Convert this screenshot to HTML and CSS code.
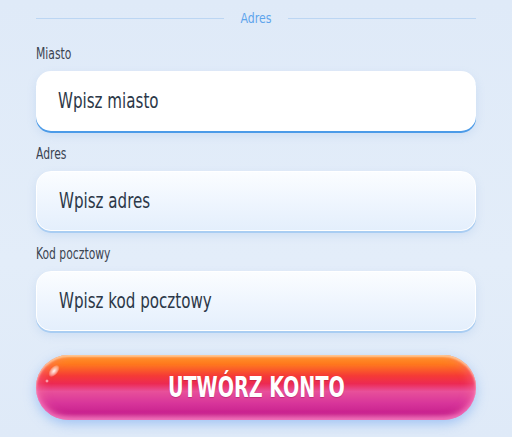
FILE: index.html
```html
<!DOCTYPE html>
<html lang="pl">
<head>
<meta charset="utf-8">
<link rel="stylesheet" href="styles.css">
</head>
<body>
<div class="form">
  <div class="divider"><span class="line"></span><span class="divider-text">Adres</span><span class="line"></span></div>
  <div class="field first">
    <label class="label"><span class="narrow">Miasto</span></label>
    <div class="input focused"><span class="narrow">Wpisz miasto</span></div>
  </div>
  <div class="field">
    <label class="label"><span class="narrow">Adres</span></label>
    <div class="input"><span class="narrow">Wpisz adres</span></div>
  </div>
  <div class="field">
    <label class="label"><span class="narrow">Kod pocztowy</span></label>
    <div class="input"><span class="narrow">Wpisz kod pocztowy</span></div>
  </div>
  <button class="submit"><span class="shine"></span><span class="shine small"></span><span class="submit-text">UTWÓRZ KONTO</span></button>
</div>
</body>
</html>
```
FILE: styles.css
```css
html, body {
  margin: 0;
  height: 100%;
}
body {
  background: linear-gradient(180deg, #dfeaf8 0%, #e3edf9 60%, #dfeaf8 100%);
  font-family: "DejaVu Sans Condensed", "Liberation Sans", sans-serif;
  overflow: hidden;
}
.form {
  padding: 9px 36px 0 36px;
  display: flex;
  flex-direction: column;
}
.narrow {
  display: inline-block;
  transform: scaleX(0.8);
  transform-origin: left center;
  white-space: nowrap;
}
.divider {
  display: flex;
  align-items: center;
  height: 18px;
}
.line {
  flex: 1;
  height: 1px;
  background: #bcd6f3;
}
.divider-text {
  color: #5ea4ec;
  font-size: 14.5px;
  width: 64px;
  text-align: center;
  display: inline-block;
  transform: scaleX(0.84);
}
.field {
  display: flex;
  flex-direction: column;
}
.label {
  color: #3b4452;
  font-size: 15px;
  height: 20px;
  line-height: 20px;
  margin-top: 13px;
  margin-bottom: 7px;
}
.field.first .label {
  margin-top: 17px;
}
.input {
  height: 60px;
  box-sizing: border-box;
  border-radius: 15px;
  padding-left: 22px;
  display: flex;
  align-items: center;
  font-size: 21px;
  color: #2c3848;
  background: linear-gradient(180deg, #fbfdff 0%, #eef5fe 55%, #e4effc 100%);
  border: 1.5px solid #ffffff;
  box-shadow: 0 2px 0 #a9cdf2, 0 4px 8px rgba(140, 180, 230, 0.25);
}
.input.focused {
  background: #ffffff;
  border: none;
  box-shadow: 0 2px 0 #4c9be8, 0 4px 8px rgba(140, 180, 230, 0.25);
}
.submit {
  position: relative;
  margin-top: 24px;
  height: 65px;
  border: none;
  border-radius: 33px;
  background: linear-gradient(180deg, #ff9a1c 0%, #ff7a1e 14%, #f53a36 32%, #ec2a52 44%, #e8509a 56%, #d8359a 74%, #c8228e 90%, #d0449e 100%);
  box-shadow: 0 4px 12px rgba(120, 170, 240, 0.6), inset 0 -3px 5px rgba(255, 140, 210, 0.6), inset 0 2px 2px rgba(255, 230, 180, 0.7), inset 6px 0 8px rgba(255, 120, 160, 0.35), inset -6px 0 8px rgba(255, 120, 160, 0.35);
  color: #ffffff;
  font-family: "DejaVu Sans Condensed", "Liberation Sans", sans-serif;
  font-weight: bold;
  font-size: 28px;
  display: flex;
  align-items: center;
  justify-content: center;
  padding: 0;
  overflow: hidden;
}
.submit-text {
  display: inline-block;
  transform: scaleX(0.76);
  white-space: nowrap;
  text-shadow: 0 1px 1px rgba(120, 0, 60, 0.3);
}
.shine {
  position: absolute;
  left: 14px;
  top: 9px;
  width: 8px;
  height: 14px;
  border-radius: 50%;
  background: radial-gradient(ellipse at center, rgba(255,255,255,0.95) 0%, rgba(255,255,255,0.4) 50%, rgba(255,255,255,0) 75%);
  transform: rotate(40deg);
}
.shine.small {
  left: 9px;
  top: 24px;
  width: 4px;
  height: 4px;
  background: radial-gradient(circle, rgba(255,255,255,0.8) 0%, rgba(255,255,255,0) 70%);
}
```
